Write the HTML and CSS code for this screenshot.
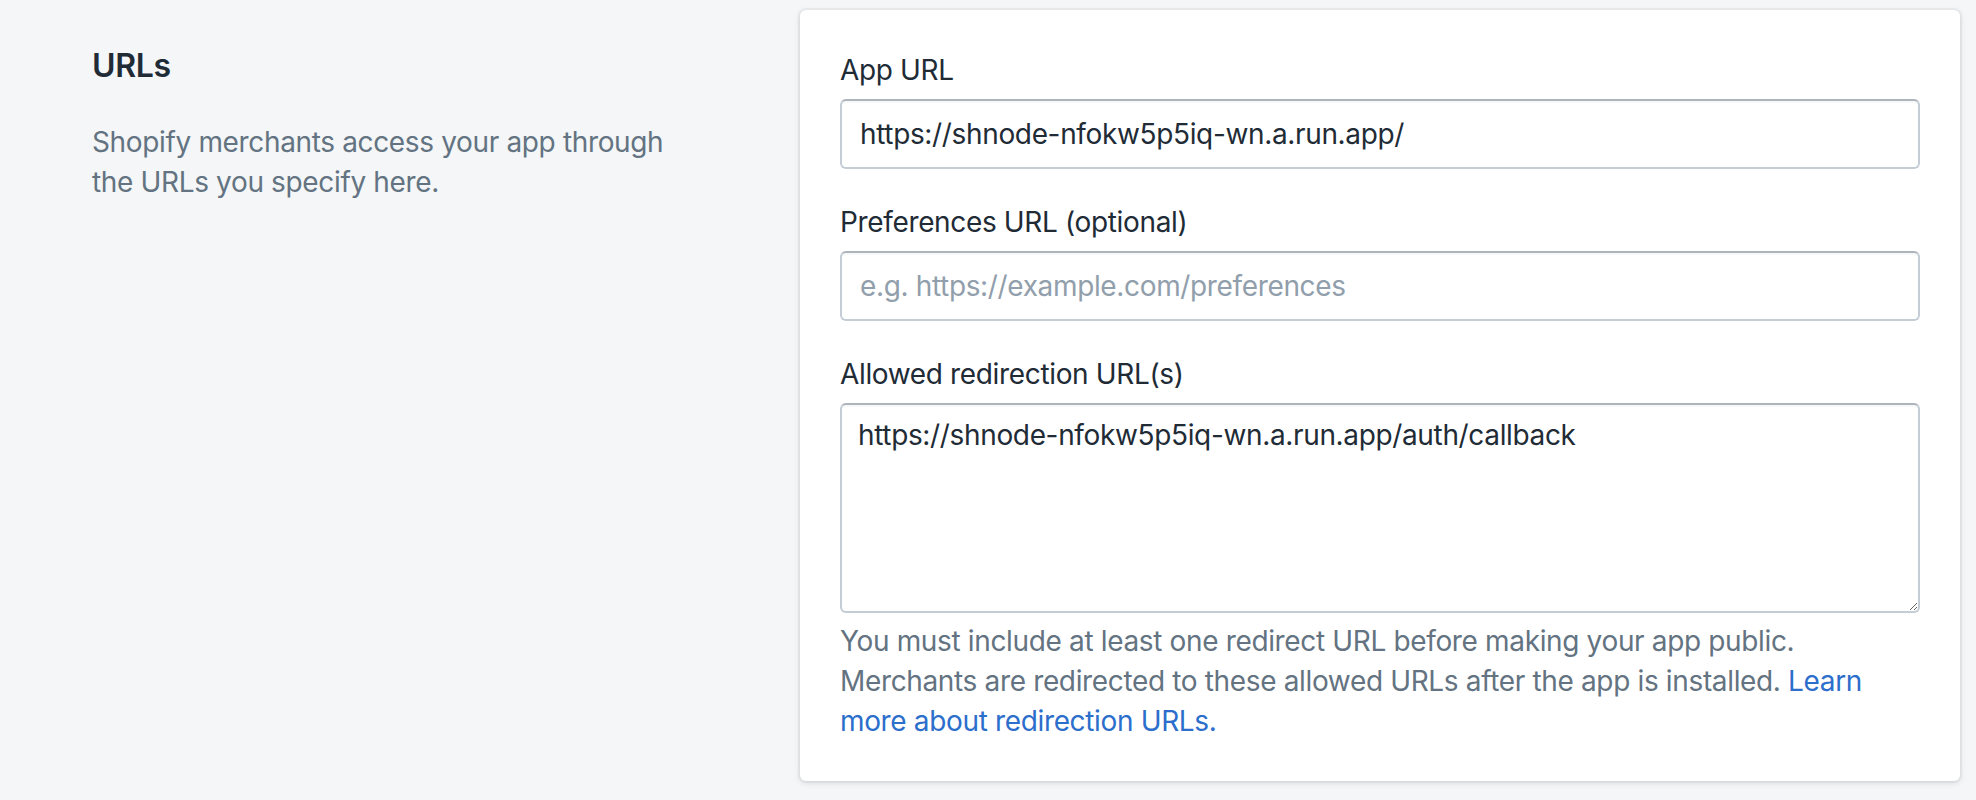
FILE: index.html
```html
<!DOCTYPE html>
<html lang="en">

<head>
    <meta charset="utf-8" />
    <title>App setup</title>
    <link rel="stylesheet" href="styles.css">
</head>

<body>
    <div class="layout">
        <div class="annotation">
            <h2 class="annotation-title">URLs</h2>
            <p class="annotation-text">Shopify merchants access your app through the URLs you specify here.</p>
        </div>
        <div class="card">
            <div class="field">
                <label class="label" for="appUrl">App URL</label>
                <input class="text-input" id="appUrl" type="text" value="https://shnode-nfokw5p5iq-wn.a.run.app/">
            </div>
            <div class="field">
                <label class="label" for="prefUrl">Preferences URL (optional)</label>
                <input class="text-input" id="prefUrl" type="text" placeholder="e.g. https://example.com/preferences">
            </div>
            <div class="field">
                <label class="label" for="redirectUrls">Allowed redirection URL(s)</label>
                <textarea class="text-area" id="redirectUrls">https://shnode-nfokw5p5iq-wn.a.run.app/auth/callback</textarea>
                <p class="help">You must include at least one redirect URL before making your app public. Merchants are redirected to these allowed URLs after the app is installed. <a href="#">Learn more about redirection URLs.</a></p>
            </div>
        </div>
    </div>
</body>

</html>
```

FILE: styles.css
```css
html {
    width: 100%;
    height: 100%;
}

body {
    margin: 0;
    height: 100%;
    background: #f4f6f8;
    color: #212b36;
    font-family: Inter, "Noto Sans", sans-serif;
    font-size: 28px;
    line-height: 40px;
    letter-spacing: -0.35px;
}

.layout {
    display: flex;
    padding: 10px 16px 0 92px;
}

/* left column */
.annotation {
    width: 708px;
    flex: none;
    padding-top: 32px;
}

.annotation-title {
    margin: 0 0 32px;
    font-size: 32px;
    line-height: 48px;
    font-weight: 600;
}

.annotation-text {
    margin: 0;
    max-width: 600px;
    color: #637381;
}

/* form card */
.card {
    flex: 1;
    padding: 40px;
    background: #fff;
    border-radius: 6px;
    box-shadow: 0 0 0 2px rgba(63, 63, 68, 0.05), 0 2px 6px 0 rgba(63, 63, 68, 0.15);
}

.field + .field {
    margin-top: 33px;
}

.label {
    display: block;
    margin-bottom: 9px;
}

.text-input,
.text-area {
    display: block;
    box-sizing: border-box;
    width: 100%;
    margin: 0;
    border: 2px solid #c4cdd5;
    border-top-color: #aeb4b9;
    border-radius: 6px;
    box-shadow: inset 0 2px 0 0 rgba(99, 115, 129, 0.05);
    background: #fff;
    color: #212b36;
    font-family: inherit;
    font-size: 28px;
    line-height: 40px;
    letter-spacing: inherit;
    outline: none;
}

.text-input {
    height: 70px;
    padding: 0 18px;
}

.text-input::placeholder {
    color: #919eab;
}

.text-area {
    height: 210px;
    padding: 10px 16px;
    resize: vertical;
}

.help {
    margin: 8px 0 0;
    color: #637381;
}

.help a {
    color: #2c6ecb;
    text-decoration: none;
}
```
